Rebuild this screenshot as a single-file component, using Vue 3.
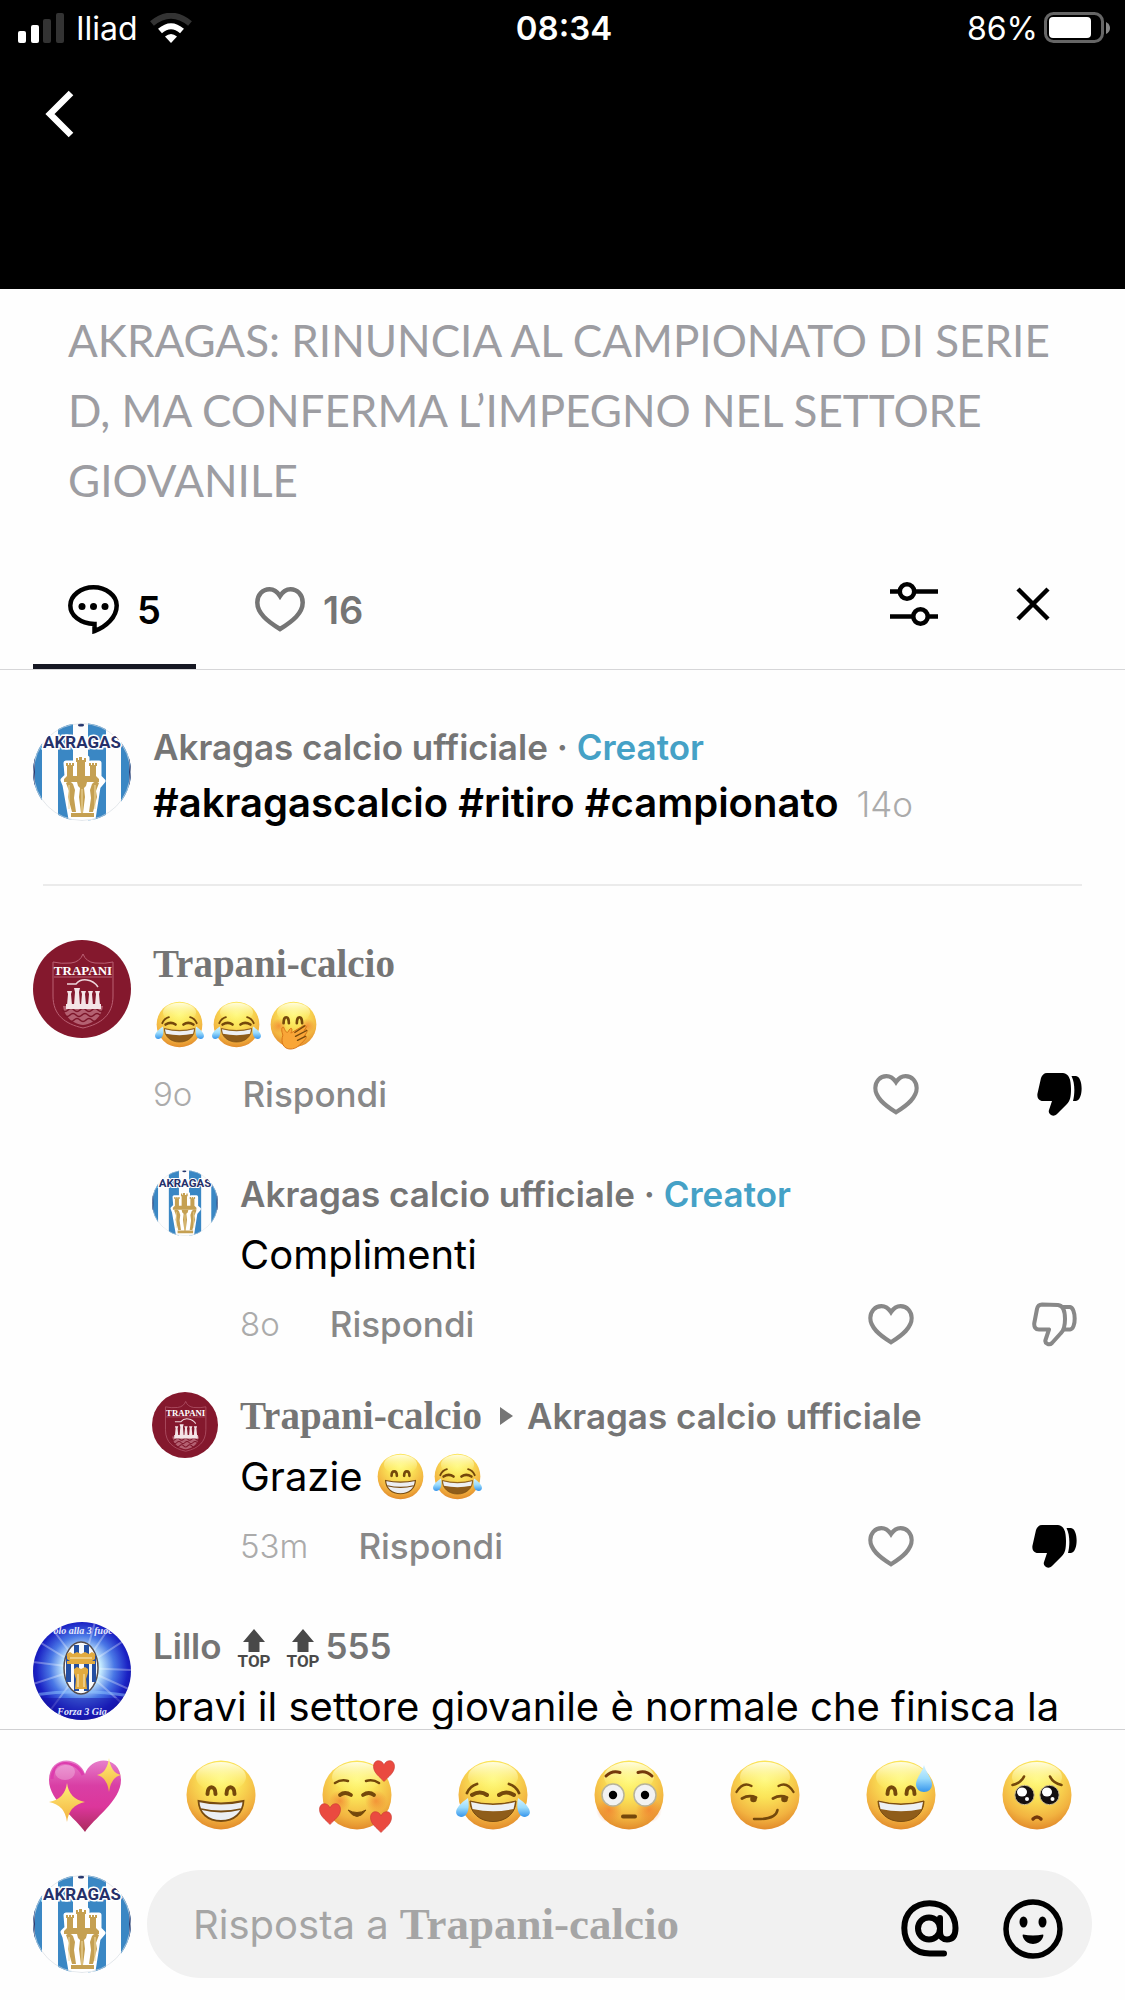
<template>
  <div class="screen">
    <!-- shared artwork: emoji, avatars and action icons -->
    <svg class="sprite" width="0" height="0" aria-hidden="true">
      <defs>
        <radialGradient id="skin" cx=".5" cy=".27" r=".76">
          <stop offset="0" stop-color="#fffb7a" />
          <stop offset=".35" stop-color="#fbe458" />
          <stop offset=".75" stop-color="#f2b340" />
          <stop offset="1" stop-color="#df8428" />
        </radialGradient>
        <linearGradient id="shine" x1="0" y1="0" x2="0" y2="1">
          <stop offset="0" stop-color="#fffde0" />
          <stop offset="1" stop-color="#fff36a" stop-opacity="0" />
        </linearGradient>
        <radialGradient id="blush">
          <stop offset="0" stop-color="#f0702a" stop-opacity=".6" />
          <stop offset="1" stop-color="#f0702a" stop-opacity="0" />
        </radialGradient>
        <linearGradient id="water" x1="0" y1="0" x2="0" y2="1">
          <stop offset="0" stop-color="#d5f3ff" />
          <stop offset=".5" stop-color="#9bdcfc" />
          <stop offset="1" stop-color="#3595ec" />
        </linearGradient>
        <linearGradient id="pink" x1="0" y1="0" x2="0" y2="1">
          <stop offset="0" stop-color="#e77fcb" />
          <stop offset=".35" stop-color="#d93fa5" />
          <stop offset=".65" stop-color="#dc369b" />
          <stop offset="1" stop-color="#a92c5c" />
        </linearGradient>
        <linearGradient id="star" x1="0" y1="0" x2="0" y2="1">
          <stop offset="0" stop-color="#fff07a" />
          <stop offset="1" stop-color="#f3b03c" />
        </linearGradient>
        <radialGradient id="glow" cx=".5" cy=".47" r=".55">
          <stop offset="0" stop-color="#f4ffff" />
          <stop offset=".35" stop-color="#c4eaff" />
          <stop offset=".6" stop-color="#4a78e6" />
          <stop offset=".85" stop-color="#1b22c4" />
          <stop offset="1" stop-color="#1512a0" />
        </radialGradient>

        <g id="face">
          <circle cx="40" cy="40" r="34.500" fill="url(#skin)" />
          <ellipse cx="40" cy="22" rx="25" ry="15" fill="url(#shine)" />
        </g>
        <path id="arches" d="M26.500 39 C26.500 30 34.500 30 34.500 39 M45.500 39 C45.500 30 53.500 30 53.500 39" fill="none" stroke="#74480b" stroke-width="4" stroke-linecap="round" />
        <g id="laugh">
          <path d="M17 46 Q40 52 63 46 C63 58 53 66.500 40 66.500 C27 66.500 17 58 17 46Z" fill="#8f5d1a" stroke="#784b10" />
          <path d="M18 47 Q40 53 62 47 L60.500 54 Q40 58.500 19.500 54Z" fill="#edf0f4" />
        </g>
        <path id="tiny-heart" d="M0 10.500 C-4 6-10.500 2-10.500-4.500 C-10.500-12-2-12 0-6 C2-12 10.500-12 10.500-4.500 C10.500 2 4 6 0 10.500Z" fill="#ea4a40" stroke="#c73830" stroke-width=".6" />
      </defs>

      <symbol id="sparkling-heart" viewBox="0 0 80 80">
        <path d="M40 77 C32 64 4 46 4 25 C4 0 34 0 40 19 C46 0 76 0 76 25 C76 46 48 64 40 77Z" fill="url(#pink)" />
        <path d="M7 24 C7 5 30 3 38 20" fill="none" stroke="#dd3cae" stroke-width="3" />
        <ellipse cx="20" cy="17" rx="10" ry="8" fill="#fff" opacity=".25" />
        <path d="M22 28 Q24 44 40 47 Q24 50 22 67 Q20 50 4 47 Q20 44 22 28Z" fill="url(#star)" />
        <path d="M64 3 Q66 18 76 20 Q66 22 64 37 Q62 22 52 20 Q62 18 64 3Z" fill="url(#star)" />
      </symbol>

      <symbol id="grin" viewBox="0 0 80 80">
        <use href="#face" /><use href="#arches" />
        <path d="M17.500 46 Q40 51 62.500 46 C62 58 53 66 40 66 C27 66 18 58 17.500 46Z" fill="#eceef2" stroke="#784b10" stroke-width="1.800" />
        <path d="M20 54 Q40 59 60 54" fill="none" stroke="#784b10" stroke-width="1.800" />
      </symbol>

      <symbol id="hearts-face" viewBox="0 0 80 80">
        <use href="#face" />
        <circle cx="23" cy="46" r="11" fill="url(#blush)" /><circle cx="59" cy="46" r="11" fill="url(#blush)" />
        <g fill="none" stroke="#74480b" stroke-linecap="round">
          <path d="M18 28 Q24 24 31 26 M49 26 Q56 24 62 28" stroke-width="2.500" />
          <path d="M23 40 Q28 36 34 40 M46 40 Q52 36 57 40" stroke-width="3.800" />
        </g>
        <path d="M31 55 Q40 60 49 55 Q40 68 31 55Z" fill="#74480b" stroke="#74480b" />
        <use href="#tiny-heart" x="67" y="16" /><use href="#tiny-heart" x="13" y="59" /><use href="#tiny-heart" x="64" y="67" />
      </symbol>

      <symbol id="joy" viewBox="0 0 80 80">
        <use href="#face" />
        <g fill="none" stroke="#74480b" stroke-linecap="round">
          <path d="M14 38 Q17 31 24 29 M66 38 Q63 31 56 29" stroke-width="2.800" />
          <path d="M19 40 Q27 35 34 40 M46 40 Q53 35 61 40" stroke-width="4" />
        </g>
        <use href="#laugh" />
        <path d="M15 43 C17 53 15 62 8 62 C-1 60 3 51 15 43Z M65 43 C63 53 65 62 72 62 C81 60 77 51 65 43Z" fill="url(#water)" />
      </symbol>

      <symbol id="flushed" viewBox="0 0 80 80">
        <use href="#face" />
        <circle cx="20" cy="55" r="13" fill="url(#blush)" /><circle cx="60" cy="55" r="13" fill="url(#blush)" />
        <path d="M17 21 Q23 15 31 17.500 M63 21 Q57 15 49 17.500" fill="none" stroke="#74380b" stroke-width="3" stroke-linecap="round" />
        <g fill="#f2f2f2" stroke="#b7b39a" stroke-width="1.500"><circle cx="24" cy="40" r="11" /><circle cx="56" cy="40" r="11" /></g>
        <circle cx="24" cy="40" r="4.200" /><circle cx="56" cy="40" r="4.200" />
        <rect x="32" y="59.500" width="16" height="4" rx="2" fill="#74480b" />
      </symbol>

      <symbol id="smirk" viewBox="0 0 80 80">
        <use href="#face" />
        <g fill="none" stroke="#74480b" stroke-linecap="round">
          <path d="M11.500 37 Q18 26 26.500 31 M68.500 37 Q62 26 53.500 31" stroke-width="2.300" />
          <path d="M17 43.500 Q24 39.500 31 42.500 M48 43.500 Q55 39.500 62 42.500" stroke-width="2.800" />
          <path d="M29 64 Q51 65 52.500 55" stroke-width="2.500" />
        </g>
        <circle cx="28.500" cy="44" r="3.300" fill="#74480b" /><circle cx="59.500" cy="44" r="3.300" fill="#74480b" />
      </symbol>

      <symbol id="sweat" viewBox="0 0 80 80">
        <use href="#face" /><use href="#arches" /><use href="#laugh" />
        <path d="M63 10 C65 18 71 23 71 29.500 C71 34 67.500 37 63 37 C58.500 37 55 34 55 29.500 C55 23 61 18 63 10Z" fill="url(#water)" />
      </symbol>

      <symbol id="pleading" viewBox="0 0 80 80">
        <use href="#face" />
        <path d="M15.500 30 Q24 28 27 21.500 M64.500 30 Q56 28 53 21.500" fill="none" stroke="#74480b" stroke-width="2.600" stroke-linecap="round" />
        <g fill="#140f10" stroke="#c9b98f"><circle cx="27.500" cy="40" r="9.700" /><circle cx="52.500" cy="40" r="9.700" /></g>
        <g fill="#fff">
          <ellipse cx="25" cy="37" rx="5" ry="4.500" /><ellipse cx="50" cy="37" rx="5" ry="4.500" />
          <circle cx="30" cy="44" r="2" /><circle cx="55.500" cy="44" r="2" />
        </g>
        <path d="M36 64 Q40 60 44 64" fill="none" stroke="#74380b" stroke-width="3.400" stroke-linecap="round" />
      </symbol>

      <symbol id="giggle" viewBox="0 0 80 80">
        <use href="#face" />
        <circle cx="18" cy="42" r="11" fill="url(#blush)" /><circle cx="61" cy="42" r="11" fill="url(#blush)" />
        <path d="M25 38 C25 26 33 26 33 38 M45 38 C45 26 53 26 53 38" fill="none" stroke="#74480b" stroke-width="4" stroke-linecap="round" />
        <path d="M25 44 C21 43 22 51 24 56 C20 67 25 77 35 77 C44 77 49 72 58 62 C61 58 59 56 56 58 L60 52 C62 48 59 47 56 49 L59 45 C60 41 57 40 53 43 L36 53 C40 46 36 42 32 51 C29 54 27 48 25 44Z" fill="#f9a638" stroke="#d87517" stroke-width="1.500" />
        <path d="M42 52 L57 42 M43 58 L60 49 M46 64 L58 58" fill="none" stroke="#74480b" stroke-width="2" stroke-linecap="round" />
      </symbol>

      <symbol id="akragas" viewBox="0 0 98 98">
        <rect width="98" height="98" fill="#fdfdfd" />
        <path d="M0 0h9v98H0z M25 0h15v98H25z M55 0h18v98H55z M88 0h10v98H88z" fill="#3a87c4" />
        <rect y="30" width="2" height="36" fill="#25356d" /><rect x="96" y="30" width="2" height="36" fill="#25356d" />
        <ellipse cx="48" cy="2" rx="3" ry="1.500" fill="#25356d" />
        <path d="M33 40h8v12h3V35h10v17h4V40h8v14l4 4-5 6-5 32H38L32 62l-2-5 4-4z" fill="#fff" stroke="#fff" stroke-width="5" stroke-linejoin="round" />
        <g fill="#c5a052">
          <path d="M33 40h2v2h1v-2h2v2h1v-2h2v3h-1v10h4V39h-1v-4h2v2h1v-3h3v3h2v-2h2v4h-1v14h5V43h-1v-3h2v2h1v-2h2v2h1v-2h2v3h-1v10l3 3v3H31v-3l3-3V43h-1z" />
          <path d="M33 60q4-3 7 1l2 6-1 8 2 14h-4l-4-15 1-6z M66 60q-4-3-7 1l-2 6 1 8-2 14h4l4-15-1-6z M44 59h10l-1 4-2 2 1 9-2 16h-2l-2-16 1-9-2-2z M38 90h23v4H38z" />
        </g>
        <path d="M36 62v24M49 66v24M62 62v24" stroke="#f1dda5" stroke-width="1" />
        <circle cx="49" cy="49" r="48.500" fill="none" stroke="#d7dde2" opacity=".7" />
      </symbol>

      <symbol id="trapani" viewBox="0 0 98 98">
        <rect width="98" height="98" fill="#84182d" />
        <path d="M50 14 Q47 22 38 23 Q28 24 20 22 V56 C20 75 32 84 50 88 C68 84 80 75 80 56 V22 Q72 24 62 23 Q53 22 50 14Z M21 37h58" fill="none" stroke="#b96073" />
        <path d="M30 66 C32 80 43 84 50 85 C57 84 68 80 70 66Z" fill="#b46071" />
        <path d="M29 70q3 3 6 0t6 0 6 0 6 0 6 0 6 0 6 0M31 75q3 3 6 0t6 0 6 0 6 0 6 0 6 0M35 80q3 3 6 0t6 0 6 0 6 0 6 0" fill="none" stroke="#7c1529" stroke-width="1.500" />
        <path d="M34 44h9q4-5 11-4 7 1 11 7" fill="none" stroke="#ecd5da" stroke-width="1.500" />
        <g fill="#f4e4e7">
          <path d="M34 51h5l-1 3 1 11h-5l1-11z M41 48h6l-1 4 1 13h-6l1-13z M48 51h5l-1 3 1 11h-5l1-11z M55 51h5l-1 3 1 11h-5l1-11z M62 51h5l-1 3 1 11h-5l1-11z" />
          <path d="M33 64h35v5H33z" />
        </g>
      </symbol>

      <symbol id="lillo" viewBox="0 0 98 98">
        <rect width="98" height="98" fill="url(#glow)" />
        <path d="M49 46L0 16M49 46L14 0M49 46L80 0M49 46L98 14M49 46L98 48M49 46L0 62M49 46L10 98M49 46L92 84M49 46L0 40M49 46L98 68M49 46L62 0" stroke="#fff" opacity=".3" stroke-width="2" />
        <path d="M0 73Q49 66 98 74" fill="none" stroke="#8fc6ff" stroke-width="3" opacity=".5" />
        <path d="M0 76h98v22H0z" fill="#1614a8" opacity=".5" />
        <ellipse cx="48" cy="46" rx="17" ry="26" fill="#f8fafc" stroke="#554b4b" stroke-width="1.500" />
        <path d="M33 34h5v26h-5z M41 23h5v46h-5z M51 23h5v46h-5z M59 34h4v26h-4z" fill="#244fa2" />
        <path d="M34 32l3-2 3 2 4-2 4 2 4-2 4 2 3-2 3 2v5l-3 2h3v3H34v-3h3l-3-2z M41 47l3-2 4 2 4-2 3 2v4l-2 6 1 10H42l1-10-2-6z" fill="#e2ab3f" />
        <path d="M45 52v13M51 52v13M37 36h22" stroke="#f8edc8" />
      </symbol>

      <symbol id="heart" viewBox="0 0 50 45">
        <path d="M25 42 C12 34 2.300 26 2.300 15.500 C2.300 8 7.500 2.300 14.500 2.300 C19 2.300 22.500 5 25 9 C27.500 5 31 2.300 35.500 2.300 C42.500 2.300 47.700 8 47.700 15.500 C47.700 26 38 34 25 42Z" fill="none" stroke="currentColor" stroke-width="4.500" />
      </symbol>

      <symbol id="thumb" viewBox="0 0 46 45">
        <g fill="none" stroke="currentColor" stroke-width="4" stroke-linejoin="round">
          <path d="M10 2.500 L26 3 C31 3.500 33 8 33 17 C33 24 32 28 29 31 L20 41 C17 44 12.500 41 13.500 38 L17 27.500 H7 C3.500 27.500 1.800 25 2.300 21 L5 7 C5.600 4 7 2.500 10 2.500Z" />
          <path d="M30 5 H38 C44 6 44.500 27 38 27.500 H32" />
        </g>
      </symbol>

      <symbol id="thumb-solid" viewBox="0 0 46 45">
        <path d="M10 1 L26 1 C32 2 34 7 34 17 C34 25 33 29 30 32 L20 42 C16 46 10.500 42 12 38 L15 29 H6 C2 29 0 26 .4 22 L4 6 C5 3 7 1 10 1Z" fill="currentColor" />
        <path d="M34.500 4 H39 C46.500 5 46.500 28 39 29 H36 C38 21 38 11 34.500 4Z" fill="currentColor" />
      </symbol>
    </svg>

    <header class="top">
      <div class="status">
        <div class="carrier">
          <svg width="46" height="30" viewBox="0 0 46 30" aria-hidden="true">
            <rect y="18" width="8" height="12" rx="2" fill="#fff" />
            <rect x="13" y="12" width="8" height="18" rx="2" fill="#fff" />
            <rect x="25" y="6" width="8" height="24" rx="2" fill="#333" />
            <rect x="38" width="8" height="30" rx="2" fill="#333" />
          </svg>
          <span>Iliad</span>
          <svg width="42" height="30" viewBox="0 0 42 30" aria-hidden="true">
            <path d="M2 10.500 Q21-5 40 10.500" fill="none" stroke="#333" stroke-width="6" />
            <path d="M10 18 Q21 8.500 32 18" fill="none" stroke="#fff" stroke-width="6" />
            <path d="M15 23.500 Q21 18.500 27 23.500 L21 30Z" fill="#fff" />
          </svg>
        </div>
        <time class="clock">08:34</time>
        <div class="battery">
          <span>86%</span>
          <svg width="66" height="32" viewBox="0 0 66 32" aria-hidden="true">
            <rect x="1.500" y="1.500" width="57" height="28" rx="8" fill="none" stroke="#666" stroke-width="3" />
            <rect x="5" y="5" width="42" height="21" rx="4" fill="#fff" />
            <path d="M62 10 Q66 12 66 16 Q66 20 62 22Z" fill="#888" />
          </svg>
        </div>
      </div>
      <button class="back" type="button" aria-label="Indietro">
        <svg width="30" height="50" viewBox="0 0 30 50"><path d="M27 4 L6 25 L27 46" fill="none" stroke="#fff" stroke-width="6.500" /></svg>
      </button>
    </header>

    <h1 class="headline">AKRAGAS: RINUNCIA AL CAMPIONATO DI SERIE D, MA CONFERMA L’IMPEGNO NEL SETTORE GIOVANILE</h1>

    <nav class="tabs">
      <button class="tab" :class="{ active: tab === 'comments' }" type="button" @click="tab = 'comments'">
        <svg width="51" height="49" viewBox="0 0 51 49" aria-hidden="true">
          <path d="M25.500 2.300 C13 2.300 2.300 10.500 2.300 20.500 C2.300 30.500 12 38.500 26.500 39 V46 C38 42 48.700 32 48.700 20.500 C48.700 10.500 38 2.300 25.500 2.300Z" fill="none" stroke="currentColor" stroke-width="4.500" />
          <circle cx="14" cy="21.500" r="3.500" fill="currentColor" /><circle cx="25.500" cy="21.500" r="3.500" fill="currentColor" /><circle cx="37" cy="21.500" r="3.500" fill="currentColor" />
        </svg>
        5
      </button>
      <button class="tab" :class="{ active: tab === 'likes' }" type="button" @click="tab = 'likes'">
        <svg width="50" height="45" aria-hidden="true"><use href="#heart" /></svg>
        16
      </button>
      <div class="tools">
        <button type="button" aria-label="Filtri">
          <svg width="48" height="44" viewBox="0 0 48 44">
            <g fill="none" stroke="#000" stroke-width="4.500">
              <path d="M0 9.500h9M25 9.500h23M0 34.500h23M38 34.500h10" />
              <circle cx="17" cy="9.500" r="7.200" /><circle cx="30.500" cy="34.500" r="7.200" />
            </g>
          </svg>
        </button>
        <button type="button" aria-label="Chiudi">
          <svg width="34" height="34" viewBox="0 0 34 34"><path d="M2 2L32 32M32 2L2 32" stroke="#000" stroke-width="4.500" /></svg>
        </button>
      </div>
    </nav>

    <main class="comments">
      <article class="comment caption">
        <svg class="avatar" viewBox="0 0 98 98" role="img" aria-label="Akragas">
          <use href="#akragas" />
          <text v-for="t in crests.akragas" :key="t.text" :x="t.x" :y="t.y" class="crest akragas" text-anchor="middle">{{ t.text }}</text>
        </svg>
        <div class="content">
          <p class="name">Akragas calcio ufficiale · <span class="creator">Creator</span></p>
          <p class="tags">#akragascalcio #ritiro #campionato <span class="time">14o</span></p>
        </div>
      </article>
      <hr class="divider" />

      <article v-for="c in comments" :key="c.id" class="comment" :class="{ reply: c.reply }">
        <svg class="avatar" viewBox="0 0 98 98" role="img" :aria-label="c.name">
          <use :href="`#${c.avatar}`" />
          <text v-for="t in crests[c.avatar]" :key="t.text" :x="t.x" :y="t.y" class="crest" :class="c.avatar" text-anchor="middle">{{ t.text }}</text>
        </svg>
        <div class="content">
          <p class="name">
            <span :class="{ serif: c.serif }">{{ c.name }}</span>
            <template v-if="c.creator"> · <span class="creator">Creator</span></template>
            <template v-if="c.to">
              <svg class="arrow" width="13" height="18" viewBox="0 0 13 18" aria-hidden="true"><path d="M0 0L13 9L0 18Z" fill="currentColor" /></svg>
              <span>{{ c.to }}</span>
            </template>
            <template v-if="c.tops">
              <span v-for="n in c.tops" :key="n" class="top-sign">
                <svg width="22" height="23" viewBox="0 0 22 23" aria-hidden="true"><path d="M11 0L22 13H16.500V23H5.500V13H0Z" fill="currentColor" /></svg>
                TOP
              </span>
              <span class="suffix">{{ c.suffix }}</span>
            </template>
          </p>
          <p class="body">
            <span v-if="c.text">{{ c.text }}</span>
            <svg v-for="(e, i) in c.emoji" :key="i" class="emoji" role="img" :aria-label="e"><use :href="`#${e}`" /></svg>
          </p>
          <div v-if="c.time" class="meta">
            <span class="time">{{ c.time }}</span>
            <button class="answer" type="button">Rispondi</button>
            <button class="like" type="button" aria-label="Mi piace">
              <svg width="46" height="41"><use href="#heart" /></svg>
            </button>
            <button class="dislike" :class="{ on: c.disliked }" type="button" aria-label="Non mi piace" @click="c.disliked = !c.disliked">
              <svg width="46" height="45"><use :href="c.disliked ? '#thumb-solid' : '#thumb'" /></svg>
            </button>
          </div>
        </div>
      </article>
    </main>

    <footer class="composer">
      <div class="quick">
        <button v-for="e in quick" :key="e" type="button" :aria-label="e">
          <svg width="80" height="80"><use :href="`#${e}`" /></svg>
        </button>
      </div>
      <div class="entry">
        <svg class="avatar" viewBox="0 0 98 98" role="img" aria-label="Akragas">
          <use href="#akragas" />
          <text v-for="t in crests.akragas" :key="t.text" :x="t.x" :y="t.y" class="crest akragas" text-anchor="middle">{{ t.text }}</text>
        </svg>
        <div class="field">
          <div class="box">
            <input id="answer" v-model="draft" type="text" />
            <label for="answer" :class="{ filled: draft }">Risposta a <span class="serif">Trapani-calcio</span></label>
          </div>
          <button type="button" aria-label="Menziona">
            <svg width="58" height="58" viewBox="0 0 58 58">
              <g fill="none" stroke="#000" stroke-width="6" stroke-linecap="round">
                <circle cx="28" cy="28.500" r="11" />
                <path d="M39 18v14c0 5 3 7.500 7 7.500 6 0 8.500-4.500 8.500-11.500 0-14.500-11-24.700-26-24.700S3.300 13.500 3.300 28c0 16 11 25.500 25.500 25.500H43" />
              </g>
            </svg>
          </button>
          <button type="button" aria-label="Emoji">
            <svg width="60" height="60" viewBox="0 0 60 60">
              <circle cx="30" cy="30" r="27" fill="none" stroke="#000" stroke-width="5.500" />
              <ellipse cx="20.500" cy="23" rx="4" ry="5.500" /><ellipse cx="39.500" cy="23" rx="4" ry="5.500" />
              <path d="M20 35.500Q30 37.500 40 35.500C41.500 35.500 39 45 30 45S18.500 35.500 20 35.500Z" />
            </svg>
          </button>
        </div>
      </div>
    </footer>
  </div>
</template>

<script setup>
import { ref } from 'vue'

const tab = ref('comments')
const draft = ref('')

// lettering on each club crest, in avatar units
const crests = {
  akragas: [{ text: 'AKRAGAS', x: 49, y: 25 }],
  trapani: [{ text: 'TRAPANI', x: 50, y: 35 }],
  lillo: [
    { text: 'olo alla 3 fuoc', x: 50, y: 12 },
    { text: 'Forza 3 Gia', x: 49, y: 93 },
  ],
}

const comments = ref([
  { id: 1, name: 'Trapani-calcio', serif: true, avatar: 'trapani', emoji: ['joy', 'joy', 'giggle'], time: '9o', disliked: true },
  { id: 2, reply: true, name: 'Akragas calcio ufficiale', creator: true, avatar: 'akragas', text: 'Complimenti', time: '8o', disliked: false },
  { id: 3, reply: true, name: 'Trapani-calcio', serif: true, to: 'Akragas calcio ufficiale', avatar: 'trapani', text: 'Grazie', emoji: ['grin', 'joy'], time: '53m', disliked: true },
  { id: 4, name: 'Lillo', tops: 2, suffix: '555', avatar: 'lillo', text: 'bravi il settore giovanile è normale che finisca la' },
])

const quick = ['sparkling-heart', 'grin', 'hearts-face', 'joy', 'flushed', 'smirk', 'sweat', 'pleading']
</script>

<style>
body {
  margin: 0;
}
</style>

<style scoped>
.screen {
  display: flex;
  flex-direction: column;
  height: 100vh;
  background: #fefefe;
  color: #000;
  font-family: Inter, "Liberation Sans", sans-serif;
}

.sprite {
  position: absolute;
}

.crest.akragas {
  font: 700 17px Roboto, sans-serif;
  fill: #25306a;
  stroke: #fff;
  stroke-width: 3px;
  paint-order: stroke;
}

.crest.trapani {
  font: 700 13px "Liberation Serif", serif;
  fill: #fff;
}

.crest.lillo {
  font: italic 700 10px "Liberation Serif", serif;
  fill: #e4e9ff;
}

button {
  display: flex;
  padding: 0;
  border: 0;
  background: none;
  color: inherit;
  font: inherit;
  cursor: pointer;
}

p {
  margin: 0;
}

.serif {
  font-family: "Liberation Serif", serif;
  font-size: 39px;
  font-weight: 700;
}

.top {
  flex: none;
  height: 289px;
  background: #000;
  color: #fff;
}

.status {
  display: grid;
  grid-template-columns: 1fr auto 1fr;
  align-items: center;
  height: 56px;
  padding: 0 15px 0 18px;
  font-size: 32px;
}

.carrier,
.battery {
  display: flex;
  align-items: center;
  gap: 12px;
}

.battery {
  justify-content: flex-end;
  gap: 6px;
}

.clock {
  font-size: 33px;
  font-weight: 600;
}

.back {
  margin: 33px 0 0 44px;
}

.headline {
  flex: none;
  margin: 0;
  padding: 16px 68px 0;
  color: #9d9da2;
  font: 400 44px/70px Lato, sans-serif;
}

.tabs {
  display: flex;
  flex: none;
  align-items: flex-end;
  gap: 24px;
  height: 154px;
  padding: 0 75px 0 33px;
  border-bottom: 1px solid #d6d6d8;
}

.tab {
  align-items: center;
  gap: 18px;
  height: 122px;
  padding: 8px 35px 0;
  border-bottom: 5px solid transparent;
  color: #757575;
  font-size: 38px;
  font-weight: 600;
}

.tab.active {
  border-color: #161823;
  color: #000;
}

.tools {
  display: flex;
  align-items: center;
  gap: 78px;
  height: 130px;
  margin-left: auto;
}

.comments {
  flex: 1;
  min-height: 0;
  padding-top: 53px;
  overflow: hidden;
}

.comment {
  display: flex;
  gap: 22px;
  margin-bottom: 48px;
  padding: 0 42px 0 33px;
}

.comment.reply {
  padding: 0 47px 0 152px;
}

.comment.reply:has(+ .reply) {
  margin-bottom: 40px;
}

.avatar {
  flex: none;
  width: 98px;
  height: 98px;
  border-radius: 50%;
  overflow: hidden;
}

.reply .avatar {
  width: 66px;
  height: 66px;
}

.content {
  flex: 1;
  min-width: 0;
}

.name {
  height: 48px;
  color: #757575;
  font-size: 35px;
  font-weight: 600;
  line-height: 48px;
  white-space: nowrap;
}

.creator {
  color: #45a1c6;
}

.arrow {
  margin: 0 14px 4px 18px;
}

.top-sign {
  display: inline-flex;
  flex-direction: column;
  align-items: center;
  margin-left: 16px;
  color: #494949;
  font: 700 17px/18px Roboto, sans-serif;
  vertical-align: middle;
}

.suffix {
  margin-left: 6px;
}

.caption {
  margin-bottom: 53px;
}

.tags {
  height: 56px;
  padding-top: 4px;
  font-size: 40px;
  font-weight: 600;
  line-height: 56px;
}

.time {
  color: #ababab;
  font-size: 33px;
  font-weight: 300;
}

.tags .time {
  margin-left: 8px;
  font-size: 35px;
}

.divider {
  height: 2px;
  margin: 0 43px 54px;
  border: 0;
  background: #ebebeb;
}

.body {
  display: flex;
  align-items: center;
  height: 56px;
  margin-top: 8px;
  font-size: 40px;
  white-space: nowrap;
}

.body span + .emoji {
  margin-left: 12px;
}

.emoji {
  width: 53px;
  height: 53px;
  margin-right: 4px;
}

.meta {
  display: flex;
  align-items: center;
  height: 56px;
  margin-top: 14px;
}

.answer {
  margin: 0 auto 0 50px;
  color: #888;
  font-size: 35px;
  font-weight: 500;
}

.like,
.dislike {
  color: #888;
}

.dislike {
  margin-left: 118px;
}

.dislike.on {
  color: #000;
}

.composer {
  flex: none;
  border-top: 1px solid #d0d0d2;
}

.quick {
  display: flex;
  justify-content: space-between;
  padding: 25px 48px 0 45px;
}

.entry {
  display: flex;
  align-items: center;
  gap: 16px;
  padding: 35px 33px 22px;
}

.field {
  display: flex;
  flex: 1;
  align-items: center;
  gap: 44px;
  height: 108px;
  padding: 0 29px 0 46px;
  border-radius: 54px;
  background: #f1f1f1;
}

.field button {
  padding-top: 10px;
}

.box {
  display: grid;
  flex: 1;
}

.box input,
.box label {
  grid-area: 1 / 1;
  align-self: center;
  font-size: 40px;
}

.box input {
  padding: 0;
  border: 0;
  outline: 0;
  background: none;
  font-family: inherit;
}

.box label {
  color: #a5a5a5;
  pointer-events: none;
}

.box .serif {
  font-size: 45px;
}

.box .filled {
  visibility: hidden;
}
</style>
